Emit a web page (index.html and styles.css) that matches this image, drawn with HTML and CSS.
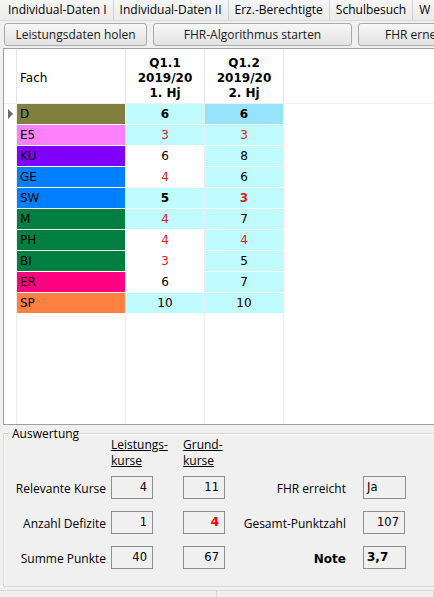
FILE: index.html
```html
<!DOCTYPE html>
<html lang="de">
<head>
  <meta charset="UTF-8" />
  <title>FHR Auswertung</title>
  <link rel="stylesheet" href="styles.css">
</head>
<body>

  <!-- Reiter -->
  <div class="tabs">
    <div class="tab">Individual-Daten I</div>
    <div class="tab">Individual-Daten II</div>
    <div class="tab">Erz.-Berechtigte</div>
    <div class="tab">Schulbesuch</div>
    <div class="tab">W</div>
  </div>

  <!-- Knöpfe -->
  <div class="buttons">
    <button class="btn btn-small">Leistungsdaten holen</button>
    <button class="btn">FHR-Algorithmus starten</button>
    <button class="btn btn-cut">FHR erne</button>
  </div>

  <!-- Leistungsdaten -->
  <div class="grid">
    <table>
      <colgroup>
        <col style="width: 13px">
        <col style="width: 109px">
        <col style="width: 79px">
        <col style="width: 79px">
        <col>
      </colgroup>
      <tr class="head">
        <td class="ind"></td>
        <td class="fach">Fach</td>
        <td class="q">Q1.1<br>2019/20<br>1. Hj</td>
        <td class="q">Q1.2<br>2019/20<br>2. Hj</td>
        <td class="rest"></td>
      </tr>
      <tr>
        <td class="ind"><span class="arrow"></span></td>
        <td class="fach c-d">D</td>
        <td class="n cy b">6</td>
        <td class="n sel b">6</td>
        <td class="rest"></td>
      </tr>
      <tr>
        <td class="ind"></td>
        <td class="fach c-e5">E5</td>
        <td class="n cy red">3</td>
        <td class="n cy red">3</td>
        <td class="rest"></td>
      </tr>
      <tr>
        <td class="ind"></td>
        <td class="fach c-ku">KU</td>
        <td class="n">6</td>
        <td class="n cy">8</td>
        <td class="rest"></td>
      </tr>
      <tr>
        <td class="ind"></td>
        <td class="fach c-ge">GE</td>
        <td class="n red">4</td>
        <td class="n cy">6</td>
        <td class="rest"></td>
      </tr>
      <tr>
        <td class="ind"></td>
        <td class="fach c-ge">SW</td>
        <td class="n cy b">5</td>
        <td class="n cy b red">3</td>
        <td class="rest"></td>
      </tr>
      <tr>
        <td class="ind"></td>
        <td class="fach c-m">M</td>
        <td class="n cy red">4</td>
        <td class="n cy">7</td>
        <td class="rest"></td>
      </tr>
      <tr>
        <td class="ind"></td>
        <td class="fach c-m">PH</td>
        <td class="n red">4</td>
        <td class="n cy red">4</td>
        <td class="rest"></td>
      </tr>
      <tr>
        <td class="ind"></td>
        <td class="fach c-m">BI</td>
        <td class="n red">3</td>
        <td class="n cy">5</td>
        <td class="rest"></td>
      </tr>
      <tr>
        <td class="ind"></td>
        <td class="fach c-er">ER</td>
        <td class="n">6</td>
        <td class="n cy">7</td>
        <td class="rest"></td>
      </tr>
      <tr>
        <td class="ind"></td>
        <td class="fach c-sp">SP</td>
        <td class="n cy">10</td>
        <td class="n cy">10</td>
        <td class="rest"></td>
      </tr>
      <tr class="filler">
        <td class="ind"></td>
        <td></td>
        <td></td>
        <td></td>
        <td class="rest"></td>
      </tr>
    </table>
  </div>

  <!-- Auswertung -->
  <fieldset class="group">
    <legend>Auswertung</legend>
    <div class="eval">
      <span></span>
      <span class="colhead">Leistungs-<br>kurse</span>
      <span class="colhead">Grund-<br>kurse</span>
      <span></span>
      <span></span>

      <span class="label">Relevante Kurse</span>
      <span class="box">4</span>
      <span class="box">11</span>
      <span class="label label-r">FHR erreicht</span>
      <span class="box left">Ja</span>

      <span class="label">Anzahl Defizite</span>
      <span class="box">1</span>
      <span class="box red b">4</span>
      <span class="label label-r">Gesamt-Punktzahl</span>
      <span class="box">107</span>

      <span class="label">Summe Punkte</span>
      <span class="box">40</span>
      <span class="box">67</span>
      <span class="label label-r note">Note</span>
      <span class="box left b">3,7</span>
    </div>
  </fieldset>

  <div class="statusbar">
    <div class="pane"></div>
    <div class="pane"></div>
  </div>

</body>
</html>
```

FILE: styles.css
```css
body {
  margin: 0;
  background: #f0f0f0;
  font-family: "Open Sans", "Noto Sans", sans-serif;
  font-size: 12px;
  color: #000;
  overflow: hidden;
  width: 434px;
  height: 597px;
}

/* Reiter oben */
.tabs {
  display: flex;
  height: 21px;
  padding-left: 2px;
  background: linear-gradient(#f6f6f6, #ebebeb);
  border-bottom: 1px solid #d9d9d9;
  box-sizing: border-box;
  white-space: nowrap;
  overflow: hidden;
}

.tab {
  flex: none;
  padding: 0 6px;
  line-height: 20px;
  border-right: 1px solid #d2d2d2;
}

/* Knopfleiste */
.buttons {
  display: flex;
  gap: 6px;
  padding: 2px 0 0 4px;
  height: 27px;
  box-sizing: border-box;
  white-space: nowrap;
  overflow: hidden;
}

.btn {
  flex: none;
  width: 199px;
  height: 23px;
  padding: 0;
  font-family: inherit;
  font-size: 12px;
  color: #1a1a1a;
  border: 1px solid #acacac;
  border-radius: 3px;
  background: linear-gradient(#f7f7f7, #e2e2e2);
}

.btn-small {
  width: 143px;
}

.btn-cut {
  text-align: left;
  padding-left: 26px;
}

/* Tabelle */
.grid {
  margin: 0 0 0 3px;
  width: 480px;
  border: 1px solid #a0a0a0;
  border-right: 0;
  background: #fff;
  font-family: "DejaVu Sans", sans-serif;
  font-size: 12px;
}

table {
  border-collapse: separate;
  border-spacing: 0;
  table-layout: fixed;
  width: 100%;
}

td {
  box-sizing: border-box;
  height: 21px;
  padding: 0;
  border-right: 1px solid #ededed;
  border-bottom: 1px solid #fff;
}

.head td {
  height: 55px;
  border-right-color: #e6e6e6;
  border-bottom: 1px solid #f0f0f0;
}

.filler td {
  height: 110px;
  border-bottom: 0;
}

td.rest {
  border-right: 0;
}

.ind {
  position: relative;
}

.arrow {
  position: absolute;
  left: 4px;
  top: 5px;
  border-left: 5px solid #6a6a6a;
  border-top: 5px solid transparent;
  border-bottom: 5px solid transparent;
}

.fach {
  padding-left: 3px;
}

.head .fach {
  padding-top: 3px;
}

.q {
  text-align: center;
  font-weight: bold;
  font-size: 12px;
  line-height: 15px;
  padding-top: 4px;
}

.n {
  text-align: center;
}

.b {
  font-weight: bold;
}

.red {
  color: #dd1a1a;
}

.cy {
  background: #c0fbff;
}

.sel {
  background: #97e3fb;
}

.c-d { background: #807f40; }
.c-e5 { background: #fd80fc; }
.c-ku { background: #8000fe; }
.c-ge { background: #0080ff; }
.c-m { background: #007f40; }
.c-er { background: #fe0080; }
.c-sp { background: #ff8040; }

/* Auswertung */
.group {
  margin: 2px 0 0 3px;
  padding: 0;
  border: 1px solid #d6d6d6;
  border-right: 0;
  box-shadow: inset 1px 1px 0 #fff;
  height: 160px;
  box-sizing: border-box;
}

.group legend {
  padding: 0;
  margin-left: 8px;
  line-height: 13px;
}

.eval {
  display: grid;
  grid-template-columns: 107px 72px 42px 138px 43px;
  grid-template-rows: 27px 23px 23px 23px;
  row-gap: 12px;
  margin-top: -3px;
  align-items: center;
}

.colhead {
  align-self: start;
  line-height: 16px;
  text-decoration: underline;
}

.label {
  text-align: right;
  padding-right: 5px;
  padding-top: 2px;
}

.label-r {
  padding-right: 17px;
}

.note {
  font-family: "DejaVu Sans", sans-serif;
  font-weight: bold;
}

.box {
  box-sizing: border-box;
  width: 42px;
  height: 23px;
  padding: 2px 5px 0 0;
  text-align: right;
  border: 1px solid #8f8f8f;
  background: #f0f0f0;
  font-family: "DejaVu Sans", sans-serif;
  font-size: 11.5px;
  line-height: 16px;
}

.box.left {
  width: 43px;
  text-align: left;
  padding-left: 3px;
}

.box.b {
  font-weight: bold;
  font-size: 12px;
}

.box.red {
  color: #f00;
}

.statusbar {
  display: flex;
  margin-top: 3px;
  height: 10px;
  border-top: 1px solid #d6d6d6;
}

.pane {
  width: 277px;
  border-right: 1px solid #d6d6d6;
}
```
